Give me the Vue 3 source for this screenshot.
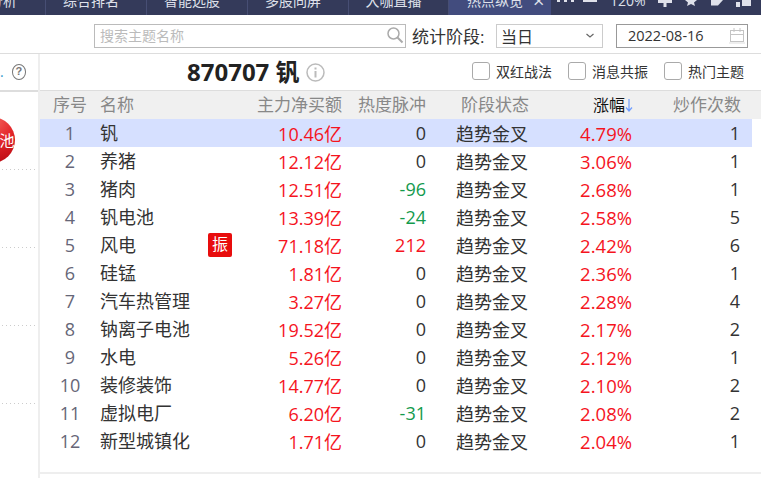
<script setup>
const rows = [
  ['钒', '', '10.46亿', '0', '', '4.79%', 1],
  ['养猪', '', '12.12亿', '0', '', '3.06%', 1],
  ['猪肉', '', '12.51亿', '-96', 'down', '2.68%', 1],
  ['钒电池', '', '13.39亿', '-24', 'down', '2.58%', 5],
  ['风电', '振', '71.18亿', '212', 'up', '2.42%', 6],
  ['硅锰', '', '1.81亿', '0', '', '2.36%', 1],
  ['汽车热管理', '', '3.27亿', '0', '', '2.28%', 4],
  ['钠离子电池', '', '19.52亿', '0', '', '2.17%', 2],
  ['水电', '', '5.26亿', '0', '', '2.12%', 1],
  ['装修装饰', '', '14.77亿', '0', '', '2.10%', 2],
  ['虚拟电厂', '', '6.20亿', '-31', 'down', '2.08%', 2],
  ['新型城镇化', '', '1.71亿', '0', '', '2.04%', 1],
]
const tabs = [
  { t: '分析', w: 46 },
  { t: '综合排名', w: 101 },
  { t: '智能选股', w: 101 },
  { t: '多股同屏', w: 101 },
  { t: '大咖直播', w: 100 },
]
const checks = ['双红战法', '消息共振', '热门主题']
</script>

<template>
  <div class="page">
    <nav class="tabs">
      <span v-for="tab in tabs" :key="tab.t" class="tab" :style="{ width: tab.w + 'px' }">{{ tab.t }}</span>
      <span class="tab active">热点纵览<i class="close">×</i></span>
      <span class="tools">
        <svg class="t-dots" width="17" height="15" viewBox="0 0 17 15"><path d="M0 0h3v2H0zM7 0h3v2H7zM14 0h3v2h-3z" fill="#dfe1ea"/></svg>
        <span class="minus"></span>
        <span class="zoom">120%</span>
        <svg class="t-plus" width="14" height="15" viewBox="0 0 14 15"><path d="M7 0v7M0 1.500h14" stroke="#dfe1ea" stroke-width="3"/></svg>
        <svg class="t-star" width="12" height="15" viewBox="0 0 12 15"><path d="M0 0h12L9 2.500 10 6 6 4 2 6l1-3.500z" fill="#dfe1ea"/></svg>
        <svg class="t-pen" width="12" height="15" viewBox="0 0 12 15"><path d="M0 0h12L7 5.500H0z" fill="#dfe1ea"/></svg>
        <svg class="t-cols" width="15" height="15" viewBox="0 0 15 15"><path d="M0 2h4v5H0zM6 0h9v6H6z" fill="#dfe1ea"/></svg>
      </span>
    </nav>

    <header class="toolbar">
      <div class="search">
        <span>搜索主题名称</span>
        <svg width="18" height="18" viewBox="0 0 18 18" fill="none" stroke="#aaa" stroke-width="1.500"><circle cx="7.500" cy="7.500" r="5.500"/><path d="M11.500 11.500l5 5" stroke-width="2"/></svg>
      </div>
      <label class="period">统计阶段:</label>
      <div class="select">当日
        <svg width="8" height="5" viewBox="0 0 8 5" fill="none" stroke="#666" stroke-width="1.200"><path d="M.5 1L4 4l3.500-3"/></svg>
      </div>
      <div class="date">2022-08-16
        <svg width="16" height="17" viewBox="0 0 16 17" fill="none" stroke="#c4c4c4"><rect x="1.500" y="3.500" width="13" height="11"/><path d="M1.500 7.500h13M5 1v4M11 1v4"/><path d="M0 16h16" stroke="#eee" stroke-width="2"/></svg>
      </div>
    </header>

    <main class="body">
      <aside class="side">
        <div class="side-head"><span class="dot">.</span><span class="help">?</span></div>
        <div class="side-item">
          <div class="ball"><span>钒电池</span></div>
        </div>
        <div class="side-item"></div>
        <div class="side-item"></div>
        <div class="side-item"></div>
      </aside>

      <section class="content">
        <div class="title-row">
          <div class="title">870707 钒
            <svg width="19" height="19" viewBox="0 0 19 19" fill="none"><circle cx="9.500" cy="9.500" r="8.500" stroke="#bbb" stroke-width="1.500"/><path d="M9.500 8v6.500M9.500 4.500v2" stroke="#bbb" stroke-width="2"/></svg>
          </div>
          <div class="checks">
            <span v-for="c in checks" :key="c" class="check"><i></i>{{ c }}</span>
          </div>
        </div>

        <div class="row head">
          <span class="c-no">序号</span>
          <span class="c-name">名称</span>
          <span class="c-fund">主力净买额</span>
          <span class="c-heat">热度脉冲</span>
          <span class="c-state h-state">阶段状态</span>
          <span class="c-pct sorted">涨幅<svg width="8" height="14" viewBox="0 0 8 14" fill="none" stroke="#6f9dff" stroke-width="1.200"><path d="M4 1v11.500M1 9.500l3 3.500 3-3.500"/></svg></span>
          <span class="c-count h-count">炒作次数</span>
        </div>
        <div v-for="(r, i) in rows" :key="r[0]" class="row" :class="{ selected: i === 0 }">
          <span class="c-no num">{{ i + 1 }}</span>
          <span class="c-name dark">{{ r[0] }}<em v-if="r[1]" class="tag">{{ r[1] }}</em></span>
          <span class="c-fund red">{{ r[2] }}</span>
          <span class="c-heat" :class="r[4] === 'down' ? 'green' : r[4] === 'up' ? 'red' : 'dark'">{{ r[3] }}</span>
          <span class="c-state dark">趋势金叉</span>
          <span class="c-pct pct red">{{ r[5] }}</span>
          <span class="c-count dark">{{ r[6] }}</span>
        </div>
        <div class="bottom-line"></div>
      </section>
    </main>
  </div>
</template>

<style>
html, body { margin: 0; background: #fff; overflow: hidden; }
</style>

<style scoped>
.page {
  width: 761px;
  height: 478px;
  overflow: hidden;
  font-family: "Open Sans", "Noto Sans CJK SC", sans-serif;
  color: #333;
  display: flex;
  flex-direction: column;
  background: #fff;
}
.tabs {
  flex: none;
  height: 15px;
  background: #343a5a;
  display: flex;
  overflow: hidden;
  color: #dfe1ea;
  font-size: 14px;
  line-height: 1px;
}
.tab {
  flex: none;
  box-sizing: border-box;
  text-align: center;
  padding-right: 10px;
  border-right: 1px solid #474e74;
  white-space: nowrap;
}
.tab:first-child { text-align: left; text-indent: -11px; padding-right: 0; }
.tab.active {
  width: 102px;
  background: #424c7e;
  border-right: 0;
  position: relative;
}
.close { font-style: normal; font-size: 20px; position: absolute; left: 84px; top: 0; }
.tools { display: flex; margin-left: 6px; align-items: flex-start; }
.minus { width: 14px; height: 2px; background: #dfe1ea; margin-left: 9px; flex: none; }
.zoom { margin-left: 13px; width: 35px; flex: none; }
.t-plus { margin-left: 13px; flex: none; }
.t-star { margin-left: 13px; flex: none; }
.t-pen { margin-left: 14px; flex: none; }
.t-cols { margin-left: 13px; flex: none; }
.t-dots { flex: none; }
.toolbar {
  flex: none;
  height: 39px;
  box-sizing: border-box;
  border-bottom: 1px solid #ddd;
  display: flex;
  align-items: center;
  padding: 3px 0 0 94px;
  font-size: 15px;
}
.search {
  width: 312px;
  height: 24px;
  box-sizing: border-box;
  border: 1px solid #bbb;
  display: flex;
  align-items: center;
  justify-content: space-between;
  padding: 0 1px 2px 5px;
  color: #bbb;
  font-size: 14px;
}
.period { margin-left: 6px; color: #333; font-size: 17px; width: 84px; white-space: nowrap; }
.select {
  width: 107px;
  height: 24px;
  box-sizing: border-box;
  border: 1px solid #ccc;
  display: flex;
  align-items: center;
  justify-content: space-between;
  padding: 0 8px 0 4px;
  font-size: 16px;
}
.date {
  width: 132px;
  height: 24px;
  margin-left: 13px;
  box-sizing: border-box;
  border: 1px solid #999;
  display: flex;
  align-items: center;
  justify-content: space-between;
  padding: 0 2px 0 11px;
  font-size: 14.500px;
  color: #333;
}
.body { flex: 1; display: flex; min-height: 0; }
.side {
  flex: none;
  width: 38px;
  border-right: 2px solid #eee;
  overflow: hidden;
}
.side-head {
  height: 38px;
  border-bottom: 2px solid #ddd;
  box-sizing: border-box;
  display: flex;
  align-items: center;
  justify-content: flex-end;
  padding-right: 12px;
  gap: 8px;
}
.dot { color: #39c; font-size: 14px; margin-top: -2px; }
.help {
  width: 16px;
  height: 16px;
  box-sizing: border-box;
  border: 1.500px solid #777;
  border-radius: 50%;
  font-size: 11px;
  line-height: 13px;
  text-align: center;
  color: #777;
  font-weight: bold;
  font-family: "Liberation Sans", sans-serif;
}
.side-item {
  height: 78px;
  position: relative;
  box-sizing: border-box;
  background: repeating-linear-gradient(to right, #ccc 0 1px, transparent 1px 4px) 2px 100% / 33px 1px no-repeat;
}
.ball {
  position: absolute;
  left: -31px;
  top: 25px;
  width: 46px;
  height: 46px;
  border-radius: 50%;
  background: radial-gradient(circle at 50% 5%, #f5665f 0%, #e4272b 45%, #b5060e 100%);
  color: #fff;
  font-size: 15px;
  line-height: 46px;
  white-space: nowrap;
  display: flex;
  justify-content: center;
}
.content { flex: 1; min-width: 0; display: flex; flex-direction: column; }
.title-row {
  flex: none;
  height: 36px;
  box-sizing: border-box;
  position: relative;
  display: flex;
  align-items: center;
  justify-content: flex-end;
  padding-right: 17px;
  padding-bottom: 2px;
}
.title {
  position: absolute;
  left: 147px;
  top: 4px;
  font-size: 24px;
  line-height: 28px;
  font-weight: bold;
  color: #222;
  display: flex;
  align-items: center;
  gap: 6px;
  white-space: nowrap;
}
.checks { display: flex; gap: 16px; font-size: 14px; color: #333; }
.check { display: flex; align-items: center; gap: 6px; }
.check i {
  width: 18px;
  height: 18px;
  box-sizing: border-box;
  border: 1px solid #aaa;
  border-radius: 3px;
}
.row {
  flex: none;
  width: 712px;
  height: 28px;
  display: flex;
  align-items: center;
  font-size: 18px;
  white-space: nowrap;
}
.row.head {
  width: 721px;
  height: 29px;
  background: #f0f0f0;
  border-top: 1px solid #ddd;
  box-sizing: border-box;
  color: #888;
  font-size: 17px;
}
.row.head span { line-height: 24px; }
.selected { background: #d6e0ff; }
.c-no { width: 60px; flex: none; text-align: center; }
.c-name { width: 132px; flex: none; position: relative; line-height: 24px; }
.c-fund { width: 110px; flex: none; text-align: right; }
.c-heat { width: 84px; flex: none; text-align: right; }
.c-state { width: 102px; flex: none; text-align: right; }
.h-state { width: 103px; }
.c-pct { width: 104px; flex: none; text-align: right; }
.pct { font-size: 18.500px; }
.c-count { width: 108px; flex: none; text-align: right; }
.sorted { color: #111; font-size: 16px; width: 104px; display: flex; justify-content: flex-end; align-items: center; }
.num { color: #667; }
.dark { color: #333; }
.red { color: #f5141e; }
.green { color: #139a4d; }
.tag {
  position: absolute;
  left: 108px;
  top: 0;
  width: 24px;
  height: 24px;
  background: #e80d0d;
  color: #fff;
  border-radius: 2px;
  font-style: normal;
  font-size: 16px;
  line-height: 23px;
  text-align: center;
}
.bottom-line {
  margin-top: 17px;
  height: 2px;
  background: #eee;
  flex: none;
}
</style>
